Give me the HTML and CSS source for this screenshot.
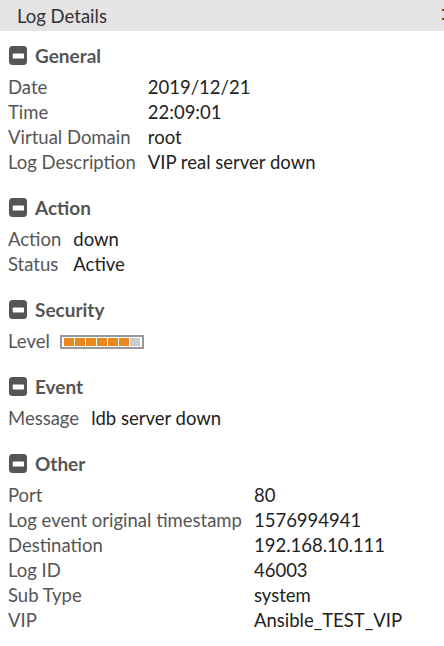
FILE: index.html
```html
<!DOCTYPE html>
<html>
<head>
<meta charset="utf-8">
<link rel="stylesheet" href="styles.css">
</head>
<body>
<div class="panel">
  <div class="header">
    <span class="title">Log Details</span>
    <span class="close-edge"><i></i><i></i></span>
  </div>
  <div class="content">
    <div class="section">
      <div class="heading"><svg class="icon" viewBox="0 0 18 19" width="18" height="19"><rect x="0" y="0" width="18" height="19" rx="3.5" fill="#555"/><rect x="3.7" y="7.4" width="11.3" height="5.2" rx="0.8" fill="#fff"/></svg><span>General</span></div>
      <table class="rows">
        <tr><td class="label">Date</td><td class="value">2019/12/21</td></tr>
        <tr><td class="label">Time</td><td class="value">22:09:01</td></tr>
        <tr><td class="label">Virtual Domain</td><td class="value">root</td></tr>
        <tr><td class="label">Log Description</td><td class="value">VIP real server down</td></tr>
      </table>
    </div>
    <div class="section">
      <div class="heading"><svg class="icon" viewBox="0 0 18 19" width="18" height="19"><rect x="0" y="0" width="18" height="19" rx="3.5" fill="#555"/><rect x="3.7" y="7.4" width="11.3" height="5.2" rx="0.8" fill="#fff"/></svg><span>Action</span></div>
      <table class="rows">
        <tr><td class="label">Action</td><td class="value">down</td></tr>
        <tr><td class="label">Status</td><td class="value">Active</td></tr>
      </table>
    </div>
    <div class="section">
      <div class="heading"><svg class="icon" viewBox="0 0 18 19" width="18" height="19"><rect x="0" y="0" width="18" height="19" rx="3.5" fill="#555"/><rect x="3.7" y="7.4" width="11.3" height="5.2" rx="0.8" fill="#fff"/></svg><span>Security</span></div>
      <table class="rows">
        <tr><td class="label label-tight">Level</td><td class="value"><div class="level"><i class="on"></i><i class="on"></i><i class="on"></i><i class="on"></i><i class="on"></i><i class="on"></i><i></i></div></td></tr>
      </table>
    </div>
    <div class="section">
      <div class="heading"><svg class="icon" viewBox="0 0 18 19" width="18" height="19"><rect x="0" y="0" width="18" height="19" rx="3.5" fill="#555"/><rect x="3.7" y="7.4" width="11.3" height="5.2" rx="0.8" fill="#fff"/></svg><span>Event</span></div>
      <table class="rows">
        <tr><td class="label">Message</td><td class="value">ldb server down</td></tr>
      </table>
    </div>
    <div class="section">
      <div class="heading"><svg class="icon" viewBox="0 0 18 19" width="18" height="19"><rect x="0" y="0" width="18" height="19" rx="3.5" fill="#555"/><rect x="3.7" y="7.4" width="11.3" height="5.2" rx="0.8" fill="#fff"/></svg><span>Other</span></div>
      <table class="rows">
        <tr><td class="label">Port</td><td class="value">80</td></tr>
        <tr><td class="label">Log event original timestamp</td><td class="value">1576994941</td></tr>
        <tr><td class="label">Destination</td><td class="value">192.168.10.111</td></tr>
        <tr><td class="label">Log ID</td><td class="value">46003</td></tr>
        <tr><td class="label">Sub Type</td><td class="value">system</td></tr>
        <tr><td class="label">VIP</td><td class="value">Ansible_TEST_VIP</td></tr>
      </table>
    </div>
  </div>
</div>
</body>
</html>
```
FILE: styles.css
```css
html, body {
  margin: 0;
  padding: 0;
  background: #fff;
}
body {
  font-family: Lato, "Open Sans", sans-serif;
  color: #222;
}
.panel {
  width: 444px;
  height: 646px;
  overflow: hidden;
}
.header {
  position: relative;
  height: 31px;
  background: #e4e4e4;
  display: flex;
  align-items: center;
  padding-left: 17px;
  font-size: 18.5px;
  color: #333;
}
.close-edge {
  position: absolute;
  right: 0;
  top: 9px;
  width: 2px;
  display: flex;
  flex-direction: column;
  gap: 7px;
}
.close-edge i {
  display: block;
  width: 2px;
  height: 2px;
  background: #6b4a1a;
}
.content {
  padding-top: 12px;
}
.section + .section {
  margin-top: 20px;
}
.heading {
  display: flex;
  align-items: center;
  height: 25px;
  padding-left: 9px;
  margin-bottom: 7px;
  font-size: 19px;
  font-weight: bold;
  color: #555;
}
.icon {
  display: block;
  margin-right: 8px;
}
.rows {
  border-collapse: collapse;
  font-size: 18.5px;
}
.rows td {
  padding: 0;
  height: 25px;
  line-height: 25px;
  white-space: nowrap;
  vertical-align: middle;
}
.label {
  padding-left: 8px !important;
  padding-right: 12px !important;
  color: #555;
}
.rows td.label-tight {
  padding-right: 10px !important;
}
.value {
  color: #222;
}
.level {
  display: flex;
  gap: 1px;
  width: max-content;
  padding: 1px 2px;
  border: 2px solid #999;
  margin-top: 1px;
}
.level i {
  display: block;
  width: 10px;
  height: 8px;
  background: #ccc;
}
.level i.on {
  background: #e8891f;
}
```
